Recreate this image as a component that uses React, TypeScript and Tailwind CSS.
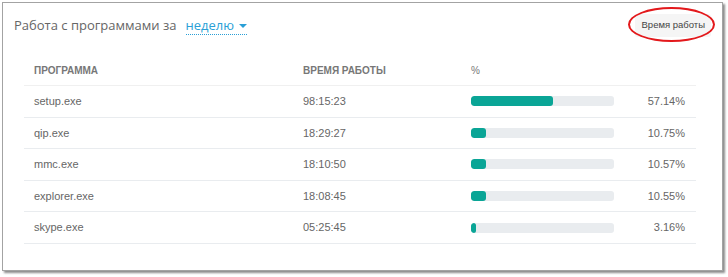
import React from "react";

const rows = [
  { name: "setup.exe", time: "98:15:23", pct: 57.14 },
  { name: "qip.exe", time: "18:29:27", pct: 10.75 },
  { name: "mmc.exe", time: "18:10:50", pct: 10.57 },
  { name: "explorer.exe", time: "18:08:45", pct: 10.55 },
  { name: "skype.exe", time: "05:25:45", pct: 3.16 },
];

const App = () => {
  return (
    <div className="w-[728px] h-[277px] bg-white pl-[2px] pt-[2px]">
      <div className="relative w-[721px] h-[269px] border border-[#a3a3a3] bg-white shadow-[2px_2px_2px_rgba(0,0,0,0.45)]">
        {/* title */}
        <div className="h-[52px] flex items-start justify-between pl-[11px] pr-[11px]">
          <div className="pt-[13px] flex items-center text-[13px] text-[#666] font-['Open_Sans',sans-serif]">
            <span>Работа с программами за</span>
            <span className="ml-[9px] flex items-center border-b border-dotted border-[#2a9fd6] text-[#2a9fd6] leading-[17px]">
              неделю
              <span className="ml-[5px] mt-[2px] w-0 h-0 border-l-[4px] border-r-[4px] border-t-[4px] border-l-transparent border-r-transparent border-t-[#2a9fd6]" />
            </span>
          </div>
          <div className="relative mt-[11px]">
            <div className="h-[23px] pl-[7px] pr-[6px] flex items-center bg-[#f5f5f5] rounded-[3px] text-[9.5px] text-[#444] font-['Liberation_Sans',Arial,sans-serif]">
              Время работы
            </div>
            <div className="absolute left-[-7px] top-[-7px] w-[87px] h-[35px] rounded-[50%] border-2 border-[#e3191c]" />
          </div>
        </div>

        {/* table */}
        <div className="ml-[21px] w-[672px] font-['Liberation_Sans',Arial,sans-serif]">
          <div className="h-[31px] grid grid-cols-[279px_168px_143px_1fr] items-center border-b border-[#f0f0f0] text-[10px] font-bold text-[#777]">
            <div className="pl-[10px]">ПРОГРАММА</div>
            <div>ВРЕМЯ РАБОТЫ</div>
            <div className="font-normal">%</div>
            <div />
          </div>
          {rows.map((r) => (
            <div
              key={r.name}
              className="h-[31.6px] grid grid-cols-[279px_168px_143px_1fr] items-center border-b border-[#e9ecef] text-[11px] text-[#666]"
            >
              <div className="pl-[10px]">{r.name}</div>
              <div>{r.time}</div>
              <div className="h-[10px] rounded-[3px] bg-[#e9ecef] overflow-hidden">
                <div
                  className="h-full rounded-[3px] bg-[#0aa596]"
                  style={{ width: `${r.pct}%` }}
                />
              </div>
              <div className="text-right pr-[11px]">{r.pct.toFixed(2)}%</div>
            </div>
          ))}
        </div>
      </div>
    </div>
  );
};

export default App;
